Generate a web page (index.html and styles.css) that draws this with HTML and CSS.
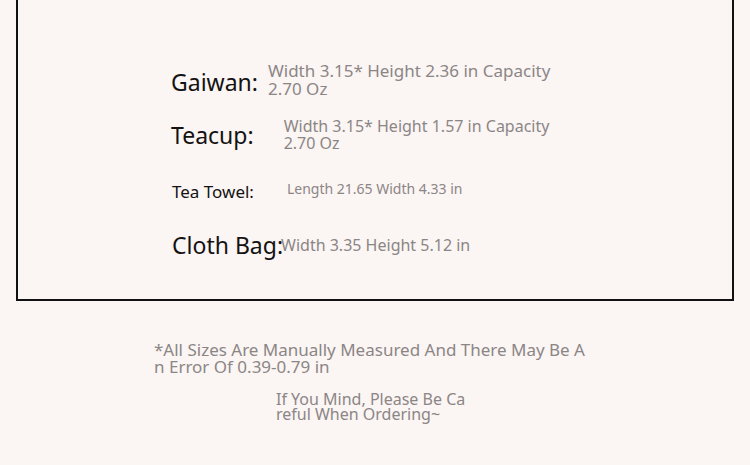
FILE: index.html
```html
<!DOCTYPE html>
<html lang="en">
<head>
<meta charset="utf-8">
<title>Sizes</title>
<link rel="stylesheet" href="styles.css">
</head>
<body>
<div class="page">
  <section class="box">
    <div class="row row-gaiwan">
      <span class="label big">Gaiwan:</span>
      <span class="value">Width 3.15* Height 2.36 in Capacity 2.70 Oz</span>
    </div>
    <div class="row row-teacup">
      <span class="label big">Teacup:</span>
      <span class="value">Width 3.15* Height 1.57 in Capacity 2.70 Oz</span>
    </div>
    <div class="row row-towel">
      <span class="label small">Tea Towel:</span>
      <span class="value small-value">Length 21.65 Width 4.33 in</span>
    </div>
    <div class="row row-bag">
      <span class="label big">Cloth Bag:</span>
      <span class="value wide">Width 3.35 Height 5.12 in</span>
    </div>
  </section>
  <div class="notes">
    <p class="note note-1">*All Sizes Are Manually Measured And There May Be An Error Of 0.39-0.79 in</p>
    <p class="note note-2">If You Mind, Please Be Careful When Ordering~</p>
  </div>
</div>
</body>
</html>
```
FILE: styles.css
```css
html, body {
  margin: 0;
  padding: 0;
  background: #fbf5f3;
}
body {
  font-family: "Noto Sans", "Open Sans", sans-serif;
  width: 750px;
  height: 465px;
  overflow: hidden;
}
.page {
  padding: 0 16px;
}
.box {
  border: 2px solid #111;
  border-top: none;
  height: 301px;
  box-sizing: border-box;
  padding: 62px 0 0 153px;
  display: flex;
  flex-direction: column;
  gap: 19px;
}
.row {
  height: 36px;
  display: flex;
  align-items: center;
}
.label {
  color: #141212;
  white-space: nowrap;
}
.big {
  font-size: 23px;
  line-height: 30px;
}
.small {
  font-size: 17px;
  line-height: 22px;
}
.value {
  color: #8b8686;
  font-size: 16px;
  line-height: 17px;
  width: 290px;
}
.row-gaiwan .value {
  font-size: 17px;
  line-height: 18px;
  width: 300px;
  margin-left: 10px;
}
.small-value {
  font-size: 14px;
  line-height: 17px;
  margin-bottom: 3px;
}
.row-gaiwan .label { margin-top: 4px; }
.row-teacup .value { margin-left: 30px; }
.row-towel .value { margin-left: 33px; }
.row-towel .label { margin-top: 3px; margin-left: 1px; }
.row-bag .label { margin-left: 1px; }
.row-bag .value { margin-left: -2px; }
.notes {
  display: flex;
  flex-direction: column;
  padding-top: 40px;
}
.note {
  margin: 0;
  color: #8b8686;
  word-break: break-all;
}
.note-1 {
  margin-left: 138px;
  width: 438px;
  font-size: 17px;
  line-height: 17px;
}
.note-2 {
  margin-left: 260px;
  margin-top: 17px;
  width: 194px;
  font-size: 16px;
  line-height: 15px;
}
```
